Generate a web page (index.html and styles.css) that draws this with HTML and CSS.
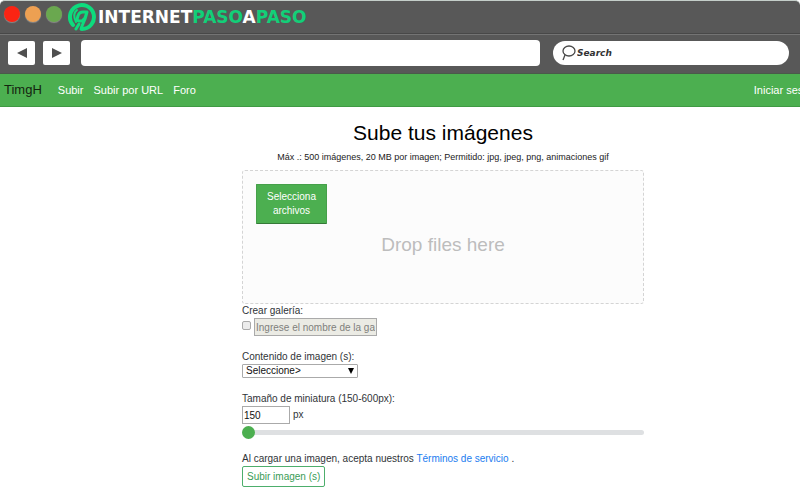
FILE: index.html
```html
<!DOCTYPE html>
<html lang="es">
<head>
<meta charset="utf-8">
<title>TimgH</title>
<link rel="stylesheet" href="styles.css">
</head>
<body>
<div class="window">
  <header class="titlebar">
    <span class="dot dot-red"></span>
    <span class="dot dot-orange"></span>
    <span class="dot dot-green"></span>
    <svg class="logo" viewBox="0 0 30 30" aria-hidden="true">
      <g fill="none" stroke="#0ddb7d" stroke-linecap="round" stroke-linejoin="round">
        <path d="M6 23A12 12 0 1 1 15 27" stroke-width="4"/>
        <path d="M9 20Q5 12 10 8" stroke-width="2"/>
        <path d="M20 10H16Q12 10 11 14L10 17Q10 19 13 19H15L18 16L20 10L18 17L15 24L14 27" stroke-width="3"/>
        <path d="M9 27L12 22" stroke-width="3"/>
      </g>
    </svg>
    <span class="brand">INTERNET<span class="brand-accent">PASO</span>A<span class="brand-accent">PASO</span></span>
  </header>
  <div class="toolbar">
    <button class="nav-button" type="button" aria-label="Atrás"><svg viewBox="0 0 12 12"><path d="M11 1V11L1 6Z"/></svg></button>
    <button class="nav-button" type="button" aria-label="Adelante"><svg viewBox="0 0 12 12"><path d="M1 1V11L11 6Z"/></svg></button>
    <input class="address" type="text" aria-label="Dirección">
    <label class="search">
      <svg viewBox="0 0 16 16" aria-hidden="true"><ellipse cx="8" cy="6" rx="6" ry="5"/><path d="M4 10L2 15"/></svg>
      <input type="text" placeholder="Search" aria-label="Search">
    </label>
  </div>
  <div class="site">
    <nav class="navbar">
      <a class="site-name" href="#">TimgH</a>
      <a href="#">Subir</a>
      <a href="#">Subir por URL</a>
      <a href="#">Foro</a>
      <a class="login" href="#">Iniciar sesión</a>
    </nav>
    <main class="content">
      <h1>Sube tus imágenes</h1>
      <p class="limits">Máx .: 500 imágenes, 20 MB por imagen; Permitido: jpg, jpeg, png, animaciones gif</p>
      <form>
        <div class="dropzone">
          <button class="pick" type="button">Selecciona archivos</button>
          <p>Drop files here</p>
        </div>
        <div class="field">
          <label for="create">Crear galería:</label>
          <div class="row">
            <input class="check" id="create" type="checkbox">
            <input class="box gallery" type="text" placeholder="Ingrese el nombre de la ga" aria-label="Nombre de la galería" disabled>
          </div>
        </div>
        <div class="field">
          <label for="kind">Contenido de imagen (s):</label>
          <div class="select">
            <select id="kind"><option>Seleccione&gt;</option></select>
            <svg viewBox="0 0 6 6" aria-hidden="true"><path d="M0 0H6L3 6Z"/></svg>
          </div>
        </div>
        <div class="field">
          <label for="size">Tamaño de miniatura (150-600px):</label>
          <div class="row">
            <input class="box size" id="size" type="text" value="150">
            <span>px</span>
          </div>
          <input class="slider" type="range" min="150" max="600" value="150" aria-label="Tamaño de miniatura">
        </div>
        <p class="terms">Al cargar una imagen, acepta nuestros <a href="#">Términos de servicio</a> .</p>
        <button class="submit" type="submit">Subir imagen (s)</button>
      </form>
    </main>
  </div>
</div>
</body>
</html>
```
FILE: styles.css
```css
* { box-sizing: border-box; }

body {
  margin: 0;
  background: #fff;
  color: #303438;
  font: 10px/14px "Liberation Sans", Arial, sans-serif;
}

h1, p { margin: 0; }

input, button, select {
  margin: 0;
  padding: 0;
  border: 0;
  font: inherit;
  color: inherit;
}

a { text-decoration: none; }

.window { overflow: hidden; }

/* Browser frame */
.titlebar {
  display: flex;
  align-items: center;
  gap: 5px;
  height: 34px;
  padding-left: 4px;
  background: #585858;
  border-top: 1px solid #c4cec9;
  border-bottom: 1px solid #484848;
  border-radius: 5px 5px 0 0;
}

.dot {
  width: 16px;
  height: 16px;
  margin-bottom: 6px;
  border-radius: 50%;
  box-shadow: 0 1px 1px #8a8a8a;
}

.dot-red { background: #fb2413; }
.dot-orange { background: #eda052; }
.dot-green { background: #6aa84f; }

.logo { width: 30px; height: 30px; }

.brand {
  margin-left: -4px;
  color: #fff;
  font: bold 17px/20px "DejaVu Sans", sans-serif;
}

.brand-accent { color: #12cf78; }

.toolbar {
  display: flex;
  align-items: center;
  gap: 8px;
  height: 40px;
  padding: 0 11px 2px 8px;
  background: #585858;
  border-top: 1px solid #747474;
  border-bottom: 1px solid #4a5a4a;
}

.nav-button {
  display: grid;
  place-items: center;
  width: 27px;
  height: 24px;
  border-radius: 2px;
  background: #fff;
}

.nav-button svg { width: 12px; height: 12px; fill: #505050; }

.address {
  flex: 2;
  height: 26px;
  margin-left: 3px;
  padding: 0 8px;
  border-radius: 4px;
  background: #fff;
}

.search {
  display: flex;
  flex: 0 0 236px;
  align-items: center;
  height: 24px;
  margin-left: 5px;
  padding: 0 8px;
  border-radius: 12px;
  background: #fff;
}

.search svg {
  flex: none;
  width: 16px;
  height: 16px;
  fill: none;
  stroke: #484848;
  stroke-width: 1.3;
}

.search input {
  width: 100%;
  min-width: 0;
  background: none;
  font: italic bold 9px/14px "DejaVu Sans", sans-serif;
}

.search input::placeholder { color: #333; opacity: 1; }

/* The page is wider than the window and runs off its right edge */
.site { margin-right: -86px; }

.navbar {
  display: flex;
  align-items: center;
  gap: 10px;
  height: 33px;
  padding: 0 68px 0 4px;
  background: #4caf50;
  border-bottom: 1px solid #3f9a43;
  font-size: 11px;
}

.navbar a { color: #fff; }
.navbar .site-name { margin-right: 6px; color: #14240f; font-size: 13px; }
.navbar .login { margin-left: auto; }

/* Upload form */
.content {
  max-width: 402px;
  margin: 0 auto;
  padding: 13px 0;
}

h1 {
  color: #000;
  font-size: 21px;
  font-weight: normal;
  line-height: 26px;
  text-align: center;
}

.limits {
  margin: 4px 0 6px;
  color: #222;
  font-size: 9px;
  text-align: center;
  white-space: nowrap;
}

.dropzone {
  height: 134px;
  padding: 13px;
  border: 1px dashed #d4d4d4;
  border-radius: 3px;
  background: #fcfcfc;
}

.dropzone p {
  margin-top: 8px;
  color: #bdbdbd;
  font-size: 19px;
  line-height: 26px;
  text-align: center;
}

.pick {
  display: block;
  width: 71px;
  height: 40px;
  padding: 0 8px;
  border: 1px solid #46a04a;
  border-bottom-color: #357a38;
  border-radius: 1px;
  background: #4caf50;
  color: #fff;
}

.field { margin-bottom: 14px; }
.field label { display: block; }

.row { display: flex; align-items: center; gap: 3px; }

.check {
  appearance: none;
  width: 9px;
  height: 9px;
  margin-bottom: 3px;
  border: 1px solid #aaa;
  border-radius: 2px;
  background: #ececec;
}

.box {
  height: 18px;
  padding: 0 1px;
  border: 1px solid #aaa;
  background: #fff;
}

.gallery { width: 123px; background: #ebebe4; }
.gallery::placeholder { color: #80807c; opacity: 1; }
.size { width: 48px; color: #111; }

.select { position: relative; width: 116px; }

.select select {
  display: block;
  appearance: none;
  width: 100%;
  height: 14px;
  padding: 0 3px;
  border: 1px solid #aaa;
  border-radius: 1px;
  background: #fff;
  color: #111;
  line-height: 12px;
}

.select svg {
  position: absolute;
  top: 4px;
  right: 4px;
  width: 6px;
  height: 6px;
  pointer-events: none;
}

.slider {
  display: block;
  appearance: none;
  width: 100%;
  height: 16px;
  background: none;
}

.slider::-webkit-slider-runnable-track {
  height: 5px;
  border-radius: 3px;
  background: #dee0e2;
}

.slider::-webkit-slider-thumb {
  appearance: none;
  width: 13px;
  height: 13px;
  margin-top: -4px;
  border-radius: 50%;
  background: #4caf50;
}

.terms { margin-top: -2px; }

.terms a { color: #1a7cf0; }

.submit {
  display: block;
  height: 21px;
  padding: 0 4px;
  border: 1px solid #4dae6c;
  border-radius: 2px;
  background: #fff;
  color: #3a9c56;
}
```
